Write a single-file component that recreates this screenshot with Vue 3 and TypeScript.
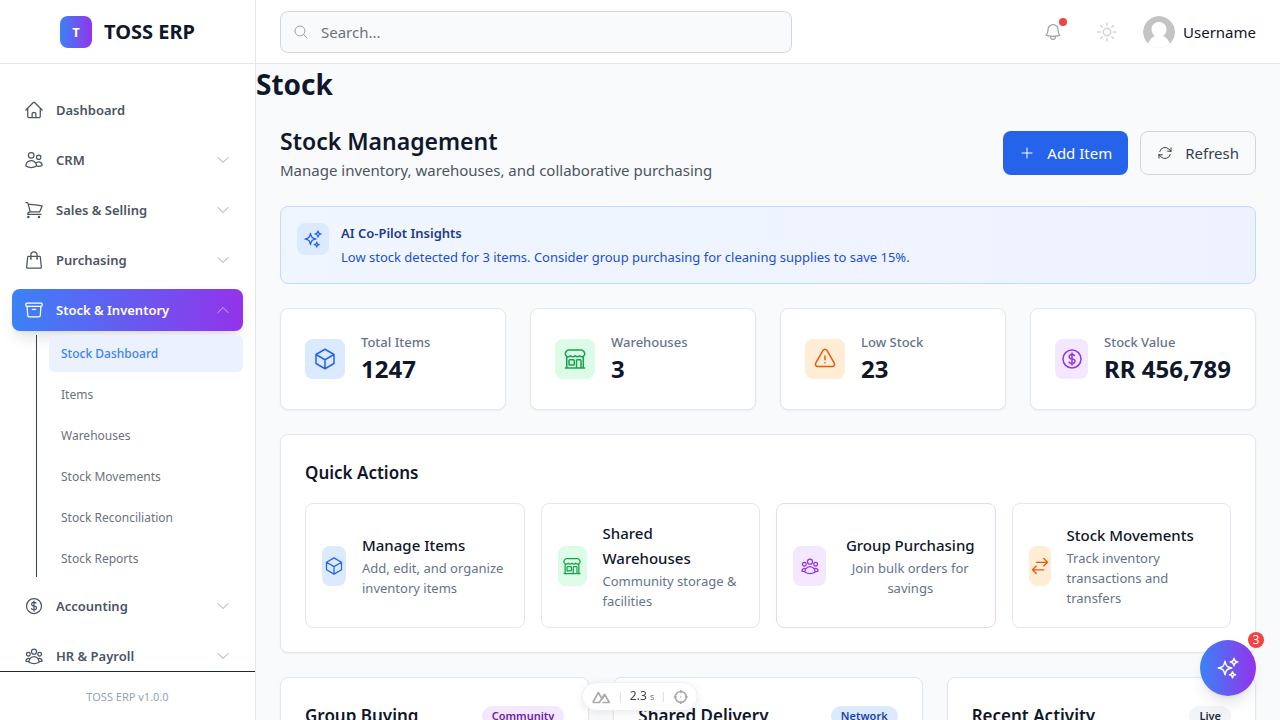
<script setup lang="ts">
import { ref } from 'vue'

const icons: Record<string, string> = {
  home: 'M2.25 12l8.954-8.955c.44-.439 1.152-.439 1.591 0L21.75 12M4.5 9.75v10.125c0 .621.504 1.125 1.125 1.125H9.75v-4.875c0-.621.504-1.125 1.125-1.125h2.25c.621 0 1.125.504 1.125 1.125V21h4.125c.621 0 1.125-.504 1.125-1.125V9.75M8.25 21h8.25',
  users: 'M15 19.128a9.38 9.38 0 002.625.372 9.337 9.337 0 004.121-.952 4.125 4.125 0 00-7.533-2.493M15 19.128v-.003c0-1.113-.285-2.16-.786-3.07M15 19.128v.106A12.318 12.318 0 018.624 21c-2.331 0-4.512-.645-6.374-1.766l-.001-.109a6.375 6.375 0 0111.964-3.07M12 6.375a3.375 3.375 0 11-6.75 0 3.375 3.375 0 016.75 0zm8.25 2.25a2.625 2.625 0 11-5.25 0 2.625 2.625 0 015.25 0z',
  cart: 'M2.25 3h1.386c.51 0 .955.343 1.087.835l.383 1.437M7.5 14.25a3 3 0 00-3 3h15.75m-12.75-3h11.218c1.121-2.3 2.1-4.684 2.924-7.138a60.114 60.114 0 00-16.536-1.84M7.5 14.25L5.106 5.272M6 20.25a.75.75 0 11-1.5 0 .75.75 0 011.5 0zm12.75 0a.75.75 0 11-1.5 0 .75.75 0 011.5 0z',
  bag: 'M15.75 10.5V6a3.75 3.75 0 10-7.5 0v4.5m11.356-1.993l1.263 12c.07.665-.45 1.243-1.119 1.243H4.25a1.125 1.125 0 01-1.12-1.243l1.264-12A1.125 1.125 0 015.513 7.5h12.974c.576 0 1.059.435 1.119 1.007zM8.625 10.5a.375.375 0 11-.75 0 .375.375 0 01.75 0zm7.5 0a.375.375 0 11-.75 0 .375.375 0 01.75 0z',
  archive: 'M20.25 7.5l-.625 10.632a2.25 2.25 0 01-2.247 2.118H6.622a2.25 2.25 0 01-2.247-2.118L3.75 7.5M10 11.25h4M3.375 7.5h17.25c.621 0 1.125-.504 1.125-1.125v-1.5c0-.621-.504-1.125-1.125-1.125H3.375c-.621 0-1.125.504-1.125 1.125v1.5c0 .621.504 1.125 1.125 1.125z',
  dollar: 'M12 6v12m-3-2.818l.879.659c1.171.879 3.07.879 4.242 0 1.172-.879 1.172-2.303 0-3.182C13.536 12.219 12.768 12 12 12c-.725 0-1.45-.22-2.003-.659-1.106-.879-1.106-2.303 0-3.182s2.9-.879 4.006 0l.415.33M21 12a9 9 0 11-18 0 9 9 0 0118 0z',
  group: 'M18 18.72a9.094 9.094 0 003.741-.479 3 3 0 00-4.682-2.72m.94 3.198l.001.031c0 .225-.012.447-.037.666A11.944 11.944 0 0112 21c-2.17 0-4.207-.576-5.963-1.584A6.062 6.062 0 016 18.719m12 0a5.971 5.971 0 00-.941-3.197m0 0A5.995 5.995 0 0012 12.75a5.995 5.995 0 00-5.058 2.772m0 0a3 3 0 00-4.681 2.72 8.986 8.986 0 003.74.477m.94-3.197a5.971 5.971 0 00-.94 3.197M15 6.75a3 3 0 11-6 0 3 3 0 016 0zm6 3a2.25 2.25 0 11-4.5 0 2.25 2.25 0 014.5 0zm-13.5 0a2.25 2.25 0 11-4.5 0 2.25 2.25 0 014.5 0z',
  cube: 'M21 7.5l-9-5.25L3 7.5m18 0l-9 5.25m9-5.25v9l-9 5.25M3 7.5l9 5.25M3 7.5v9l9 5.25m0-9v9',
  store: 'M13.5 21v-7.5a.75.75 0 01.75-.75h3a.75.75 0 01.75.75V21m-4.5 0H2.36m11.14 0H18m0 0h3.64m-1.39 0V9.349m-16.5 11.65V9.35m0 0a3.001 3.001 0 003.75-.615A2.993 2.993 0 009.75 9.75c.896 0 1.7-.393 2.25-1.016a2.993 2.993 0 002.25 1.016c.896 0 1.7-.393 2.25-1.016a3.001 3.001 0 003.75.614m-16.5 0a3.004 3.004 0 01-.621-4.72L4.318 3.44A1.5 1.5 0 015.378 3h13.243a1.5 1.5 0 011.06.44l1.19 1.189a3 3 0 01-.621 4.72m-13.5 8.65h3.75a.75.75 0 00.75-.75V13.5a.75.75 0 00-.75-.75H6.75a.75.75 0 00-.75.75v3.75c0 .415.336.75.75.75z',
  warning: 'M12 9v3.75m-9.303 3.376c-.866 1.5.217 3.374 1.948 3.374h14.71c1.73 0 2.813-1.874 1.948-3.374L13.949 3.378c-.866-1.5-3.032-1.5-3.898 0L2.697 16.126zM12 15.75h.007v.008H12v-.008z',
  swap: 'M7.5 21L3 16.5m0 0L7.5 12M3 16.5h13.5m0-13.5L21 7.5m0 0L16.5 12M21 7.5H7.5',
  sparkles: 'M9.813 15.904L9 18.75l-.813-2.846a4.5 4.5 0 00-3.09-3.09L2.25 12l2.846-.813a4.5 4.5 0 003.09-3.09L9 5.25l.813 2.846a4.5 4.5 0 003.09 3.09L15.75 12l-2.846.813a4.5 4.5 0 00-3.09 3.09zM18.259 8.715L18 9.75l-.259-1.035a3.375 3.375 0 00-2.455-2.456L14.25 6l1.036-.259a3.375 3.375 0 002.455-2.456L18 2.25l.259 1.035a3.375 3.375 0 002.456 2.456L21.75 6l-1.035.259a3.375 3.375 0 00-2.456 2.456zM16.894 20.567L16.5 21.75l-.394-1.183a2.25 2.25 0 00-1.423-1.423L13.5 18.75l1.183-.394a2.25 2.25 0 001.423-1.423l.394-1.183.394 1.183a2.25 2.25 0 001.423 1.423l1.183.394-1.183.394a2.25 2.25 0 00-1.423 1.423z',
  bell: 'M14.857 17.082a23.848 23.848 0 005.454-1.31A8.967 8.967 0 0118 9.75v-.7V9A6 6 0 006 9v.75a8.967 8.967 0 01-2.312 6.022c1.733.64 3.56 1.085 5.455 1.31m5.714 0a24.255 24.255 0 01-5.714 0m5.714 0a3 3 0 11-5.714 0',
  sun: 'M12 3v2.25m6.364.386l-1.591 1.591M21 12h-2.25m-.386 6.364l-1.591-1.591M12 18.75V21m-4.773-4.227l-1.591 1.591M5.25 12H3m4.227-4.773L5.636 5.636M15.75 12a3.75 3.75 0 11-7.5 0 3.75 3.75 0 017.5 0z',
  plus: 'M12 4.5v15m7.5-7.5h-15',
  refresh: 'M16.023 9.348h4.992v-.001M2.985 19.644v-4.992m0 0h4.992m-4.993 0l3.181 3.183a8.25 8.25 0 0013.803-3.7M4.031 9.865a8.25 8.25 0 0113.803-3.7l3.181 3.182m0-4.991v4.99',
  search: 'M21 21l-5.197-5.197m0 0A7.5 7.5 0 105.196 5.196a7.5 7.5 0 0010.607 10.607z',
  down: 'M19.5 8.25l-7.5 7.5-7.5-7.5',
  up: 'M4.5 15.75l7.5-7.5 7.5 7.5',
}

interface NavItem { label: string; icon: string; children?: string[]; leaf?: boolean }

const nav: NavItem[] = [
  { label: 'Dashboard', icon: 'home', leaf: true },
  { label: 'CRM', icon: 'users' },
  { label: 'Sales & Selling', icon: 'cart' },
  { label: 'Purchasing', icon: 'bag' },
  {
    label: 'Stock & Inventory',
    icon: 'archive',
    children: ['Stock Dashboard', 'Items', 'Warehouses', 'Stock Movements', 'Stock Reconciliation', 'Stock Reports'],
  },
  { label: 'Accounting', icon: 'dollar' },
  { label: 'HR & Payroll', icon: 'group' },
]

const stats = [
  { label: 'Total Items', value: '1247', icon: 'cube', tone: 'blue' },
  { label: 'Warehouses', value: '3', icon: 'store', tone: 'green' },
  { label: 'Low Stock', value: '23', icon: 'warning', tone: 'orange' },
  { label: 'Stock Value', value: 'RR 456,789', icon: 'dollar', tone: 'purple' },
]

const actions = [
  { title: 'Manage Items', text: 'Add, edit, and organize inventory items', icon: 'cube', tone: 'blue' },
  { title: 'Shared Warehouses', text: 'Community storage & facilities', icon: 'store', tone: 'green' },
  { title: 'Group Purchasing', text: 'Join bulk orders for savings', icon: 'group', tone: 'purple' },
  { title: 'Stock Movements', text: 'Track inventory transactions and transfers', icon: 'swap', tone: 'orange' },
]

const panels = [
  { title: 'Group Buying', badge: 'Community', tone: 'purple' },
  { title: 'Shared Delivery', badge: 'Network', tone: 'blue' },
  { title: 'Recent Activity', badge: 'Live', tone: 'gray' },
]

const query = ref('')
</script>

<template>
  <div class="shell">
    <aside class="sidebar">
      <div class="brand">
        <span class="brand-mark">T</span>
        <span class="brand-name">TOSS ERP</span>
      </div>
      <nav class="nav" aria-label="Main">
        <div v-for="item in nav" :key="item.label">
          <a v-if="item.leaf" href="#" class="nav-item">
            <svg class="icon i20" viewBox="0 0 24 24"><path :d="icons[item.icon]" /></svg>
            <span class="nav-label">{{ item.label }}</span>
          </a>
          <button v-else type="button" class="nav-item" :class="{ active: item.children }" :aria-expanded="!!item.children">
            <svg class="icon i20" viewBox="0 0 24 24"><path :d="icons[item.icon]" /></svg>
            <span class="nav-label">{{ item.label }}</span>
            <svg class="icon i16 chevron" viewBox="0 0 24 24"><path :d="item.children ? icons.up : icons.down" /></svg>
          </button>
          <div v-if="item.children" class="subnav">
            <a v-for="(child, i) in item.children" :key="child" href="#" class="sub-item" :class="{ current: i === 0 }">{{ child }}</a>
          </div>
        </div>
      </nav>
      <div class="version">TOSS ERP v1.0.0</div>
    </aside>

    <div class="page">
      <header class="topbar">
        <label class="search">
          <svg class="icon i16" viewBox="0 0 24 24"><path :d="icons.search" /></svg>
          <input v-model="query" type="search" placeholder="Search..." aria-label="Search">
        </label>
        <div class="tools">
          <button type="button" class="tool" aria-label="Notifications">
            <svg class="icon i20" viewBox="0 0 24 24"><path :d="icons.bell" /></svg>
            <span class="dot"></span>
          </button>
          <button type="button" class="tool pale" aria-label="Toggle theme">
            <svg class="icon i24" viewBox="0 0 24 24"><path :d="icons.sun" /></svg>
          </button>
          <button type="button" class="user">
            <svg class="avatar" viewBox="0 0 32 32">
              <circle cx="16" cy="16" r="16" fill="#c4c4c4" />
              <path d="M16 6c-4.300 0-7.500 3.300-7.500 7.500 0 3 1.700 5.400 3.500 6.500-3 1-6 4.500-7 8.200V32h22v-3.800c-1-3.700-4-7.200-7-8.200 1.800-1.100 3.500-3.500 3.500-6.500C23.500 9.300 20.300 6 16 6z" fill="#fff" />
            </svg>
            <span>Username</span>
          </button>
        </div>
      </header>

      <main class="main">
        <h1 class="page-title">Stock</h1>
        <div class="content">
          <div class="heading">
            <div>
              <h2>Stock Management</h2>
              <p>Manage inventory, warehouses, and collaborative purchasing</p>
            </div>
            <div class="buttons">
              <button type="button" class="btn primary">
                <svg class="icon i16" viewBox="0 0 24 24"><path :d="icons.plus" /></svg>Add Item
              </button>
              <button type="button" class="btn outline">
                <svg class="icon i16" viewBox="0 0 24 24"><path :d="icons.refresh" /></svg>Refresh
              </button>
            </div>
          </div>

          <section class="insight">
            <span class="insight-icon blue"><svg class="icon i20" viewBox="0 0 24 24"><path :d="icons.sparkles" /></svg></span>
            <div>
              <h3>AI Co-Pilot Insights</h3>
              <p>Low stock detected for 3 items. Consider group purchasing for cleaning supplies to save 15%.</p>
            </div>
          </section>

          <section class="stats">
            <article v-for="s in stats" :key="s.label" class="card stat">
              <span class="tile" :class="s.tone"><svg class="icon i24" viewBox="0 0 24 24"><path :d="icons[s.icon]" /></svg></span>
              <div>
                <p class="stat-label">{{ s.label }}</p>
                <p class="stat-value">{{ s.value }}</p>
              </div>
            </article>
          </section>

          <section class="card quick">
            <h3>Quick Actions</h3>
            <div class="actions">
              <button v-for="a in actions" :key="a.title" type="button" class="action" :class="'is-' + a.tone">
                <span class="tile" :class="a.tone"><svg class="icon i20" viewBox="0 0 24 24"><path :d="icons[a.icon]" /></svg></span>
                <span class="action-body">
                  <span class="action-title">{{ a.title }}</span>
                  <span class="action-text">{{ a.text }}</span>
                </span>
              </button>
            </div>
          </section>

          <section class="panels">
            <article v-for="p in panels" :key="p.title" class="card panel">
              <h3>{{ p.title }}</h3>
              <span class="badge" :class="'badge-' + p.tone">{{ p.badge }}</span>
            </article>
          </section>
        </div>
      </main>
    </div>

    <div class="devbar">
      <svg class="peaks" viewBox="0 0 20 14"><path d="M11.500 12.500H18.500L14 4.500L11 9.500M2 12.500L7.500 2.500L11 8.500M2 12.500H8.500L13.500 4.500" /></svg>
      <span class="sep"></span>
      <span class="time">2.3 <small>s</small></span>
      <span class="sep"></span>
      <svg class="target" viewBox="0 0 16 16"><circle cx="8" cy="8" r="5.500" /><path d="M8 1v3M8 12v3M1 8h3M12 8h3M8 7.500v1" /></svg>
    </div>

    <button type="button" class="assistant" aria-label="AI assistant">
      <svg class="icon i24" viewBox="0 0 24 24"><path :d="icons.sparkles" /></svg>
      <span class="count">3</span>
    </button>
  </div>
</template>

<style>
body {
  margin: 0;
}
</style>

<style scoped>
.shell {
  display: flex;
  height: 100vh;
  overflow: hidden;
  background: #f9fafb;
  color: #0f172a;
  font-family: "Noto Sans", "Open Sans", sans-serif;
  font-size: 15px;
  line-height: 24px;
}
* {
  box-sizing: border-box;
}
h1, h2, h3, p {
  margin: 0;
}
button {
  font: inherit;
  color: inherit;
  border: 0;
  background: none;
  padding: 0;
  cursor: pointer;
}
a {
  color: inherit;
  text-decoration: none;
}
.icon {
  flex: none;
  display: block;
  fill: none;
  stroke: currentColor;
  stroke-width: 1.5;
  stroke-linecap: round;
  stroke-linejoin: round;
}
.i16 { width: 16px; height: 16px; }
.i20 { width: 20px; height: 20px; }
.i24 { width: 24px; height: 24px; }

.sidebar {
  flex: none;
  width: 256px;
  display: flex;
  flex-direction: column;
  background: #fff;
  border-right: 1px solid #e5e7eb;
}
.brand {
  flex: none;
  height: 64px;
  display: flex;
  align-items: center;
  justify-content: center;
  gap: 12px;
  border-bottom: 1px solid #e5e7eb;
}
.brand-mark {
  width: 32px;
  height: 32px;
  border-radius: 8px;
  background: linear-gradient(90deg, #3b82f6, #9333ea);
  color: #fff;
  font-size: 13px;
  font-weight: 700;
  line-height: 32px;
  text-align: center;
}
.brand-name {
  font-size: 20px;
  font-weight: 700;
}
.nav {
  flex: 1;
  min-height: 0;
  overflow: hidden;
  display: flex;
  flex-direction: column;
  gap: 8px;
  padding: 25px 12px 0;
}
.nav-item {
  width: 100%;
  height: 42px;
  display: flex;
  align-items: center;
  gap: 12px;
  padding: 0 12px;
  border-radius: 8px;
  color: #4b5563;
  font-size: 13px;
  font-weight: 600;
  text-align: left;
}
.nav-label {
  flex: 1;
  white-space: nowrap;
}
.chevron {
  color: #9ca3af;
}
.active {
  background: linear-gradient(90deg, #3b82f6, #9333ea);
  color: #fff;
  box-shadow: 0 10px 15px -3px rgba(0, 0, 0, 0.1), 0 4px 6px -4px rgba(0, 0, 0, 0.1);
}
.active .chevron {
  color: #d8b4fe;
}
.subnav {
  display: flex;
  flex-direction: column;
  gap: 4px;
  margin: 4px 0 0 24px;
  padding-left: 12px;
  border-left: 1px solid #334155;
}
.sub-item {
  height: 37px;
  padding: 0 12px;
  border-radius: 6px;
  color: #6b7280;
  font-size: 12px;
  line-height: 37px;
  white-space: nowrap;
}
.current {
  background: #ebf2fe;
  color: #3b82f6;
  font-weight: 500;
}
.version {
  flex: none;
  height: 49px;
  border-top: 1px solid #1e293b;
  color: #94a3b8;
  font-size: 11px;
  line-height: 50px;
  text-align: center;
}

.page {
  flex: 1;
  min-width: 0;
  display: flex;
  flex-direction: column;
}
.topbar {
  flex: none;
  height: 64px;
  display: flex;
  align-items: center;
  justify-content: space-between;
  gap: 24px;
  padding: 0 24px;
  background: #fff;
  border-bottom: 1px solid #e5e7eb;
}
.search {
  flex: 0 1 512px;
  height: 42px;
  display: flex;
  align-items: center;
  gap: 12px;
  padding: 0 12px;
  border: 1px solid #d1d5db;
  border-radius: 8px;
  background: #f9fafb;
  color: #9ca3af;
}
.search input {
  flex: 1;
  min-width: 0;
  border: 0;
  padding: 0;
  outline: 0;
  background: none;
  font: inherit;
  color: #111827;
}
.search input::placeholder {
  color: #6b7280;
  opacity: 1;
}
.tools {
  flex: none;
  display: flex;
  align-items: center;
}
.tool {
  position: relative;
  width: 36px;
  height: 36px;
  margin-right: 18px;
  display: grid;
  place-items: center;
  color: #9ca3af;
}
.pale {
  color: #d1d5db;
}
.dot {
  position: absolute;
  top: 4px;
  right: 4px;
  width: 8px;
  height: 8px;
  border-radius: 50%;
  background: #ef4444;
}
.user {
  display: flex;
  align-items: center;
  gap: 8px;
}
.avatar {
  width: 32px;
  height: 32px;
  border-radius: 50%;
}

.main {
  flex: 1;
  min-height: 0;
  overflow: hidden;
}
.page-title {
  font-size: 28px;
  font-weight: 700;
  line-height: 40px;
}
.content {
  display: flex;
  flex-direction: column;
  gap: 24px;
  padding: 20px 24px 24px;
}
.heading {
  display: flex;
  align-items: center;
  justify-content: space-between;
  gap: 24px;
}
.heading h2 {
  font-size: 23px;
  font-weight: 600;
  line-height: 34px;
}
.heading p {
  color: #4b5563;
  line-height: 24px;
}
.buttons {
  display: flex;
  gap: 12px;
}
.btn {
  height: 44px;
  display: flex;
  align-items: center;
  gap: 12px;
  padding: 0 16px;
  border: 1px solid #d1d5db;
  border-radius: 8px;
  color: #374151;
  white-space: nowrap;
}
.primary {
  border: 0;
  background: #2563eb;
  color: #fff;
}
.insight {
  display: flex;
  align-items: flex-start;
  gap: 12px;
  min-height: 78px;
  padding: 16px;
  border: 1px solid #bfdbfe;
  border-radius: 8px;
  background: linear-gradient(90deg, #eff6ff, #eef2ff);
}
.insight-icon {
  width: 32px;
  height: 32px;
  display: grid;
  place-items: center;
  border-radius: 8px;
}
.insight h3 {
  font-size: 13px;
  font-weight: 600;
  line-height: 20px;
  color: #1e3a8a;
}
.insight p {
  margin-top: 4px;
  font-size: 13px;
  line-height: 20px;
  color: #1d4ed8;
}
.card {
  background: #fff;
  border: 1px solid #e2e8f0;
  border-radius: 8px;
  box-shadow: 0 1px 2px rgba(0, 0, 0, 0.05);
}
.tile {
  flex: none;
  width: 40px;
  height: 40px;
  display: flex;
  align-items: center;
  justify-content: center;
  border-radius: 8px;
}
.blue { background: #dbeafe; color: #2563eb; }
.green { background: #dcfce7; color: #16a34a; }
.orange { background: #ffedd5; color: #ea580c; }
.purple { background: #f3e8ff; color: #9333ea; }
.stats {
  display: grid;
  grid-template-columns: repeat(4, minmax(0, 1fr));
  gap: 24px;
}
.stat {
  display: flex;
  align-items: center;
  gap: 16px;
  min-height: 102px;
  padding: 20px 24px;
}
.stat .purple {
  width: 33px;
}
.stat-label {
  color: #64748b;
  font-size: 13px;
  font-weight: 500;
  line-height: 20px;
}
.stat-value {
  font-size: 24px;
  font-weight: 700;
  line-height: 34px;
  white-space: nowrap;
}
.quick {
  padding: 24px;
}
.quick h3, .panel h3 {
  font-size: 17px;
  font-weight: 600;
  line-height: 28px;
}
.actions {
  display: grid;
  grid-template-columns: repeat(4, minmax(0, 1fr));
  gap: 16px;
  margin-top: 16px;
}
.action {
  display: flex;
  align-items: center;
  gap: 16px;
  min-height: 125px;
  padding: 16px;
  border: 1px solid #e2e8f0;
  border-radius: 8px;
  text-align: left;
}
.action .blue { width: 24px; }
.action .green { width: 29px; }
.action .purple { width: 33px; }
.action .orange { width: 22px; }
.is-purple {
  border-color: #e9d5ff;
  text-align: center;
}
.action-body {
  flex: 1;
  min-width: 0;
}
.action-title {
  display: block;
  font-weight: 500;
  line-height: 25px;
}
.action-text {
  display: block;
  color: #64748b;
  font-size: 13px;
  line-height: 20px;
}
.panels {
  display: grid;
  grid-template-columns: repeat(3, minmax(0, 1fr));
  gap: 24px;
}
.panel {
  display: flex;
  align-items: center;
  justify-content: space-between;
  padding: 24px;
}
.badge {
  padding: 2px 10px;
  border-radius: 12px;
  font-size: 11px;
  font-weight: 600;
  line-height: 16px;
}
.badge-purple { background: #f3e8ff; color: #6b21a8; }
.badge-blue { background: #dbeafe; color: #1e40af; }
.badge-gray { background: #f1f5f9; color: #1e293b; }

.devbar {
  position: fixed;
  left: 50%;
  bottom: 9px;
  transform: translateX(-50%);
  display: flex;
  align-items: center;
  gap: 9px;
  height: 29px;
  padding: 0 8px;
  border: 1px solid #efefef;
  border-radius: 15px;
  background: #fff;
  box-shadow: 0 2px 8px rgba(0, 0, 0, 0.08);
  font-size: 12px;
  line-height: 16px;
  color: #444;
  white-space: nowrap;
}
.devbar svg {
  flex: none;
  fill: none;
  stroke: #aaa;
  stroke-width: 1.6;
  stroke-linejoin: round;
}
.peaks { width: 20px; height: 14px; }
.target { width: 16px; height: 16px; }
.sep {
  width: 1px;
  height: 10px;
  background: #ddd;
}
.time small {
  font-size: 9px;
  color: #777;
}
.assistant {
  position: fixed;
  right: 24px;
  bottom: 24px;
  width: 56px;
  height: 56px;
  display: grid;
  place-items: center;
  border-radius: 50%;
  background: linear-gradient(90deg, #3b82f6, #9333ea);
  color: #fff;
  box-shadow: 0 10px 15px -3px rgba(0, 0, 0, 0.1), 0 4px 6px -4px rgba(0, 0, 0, 0.1);
}
.count {
  position: absolute;
  top: -8px;
  right: -8px;
  width: 16px;
  height: 16px;
  border-radius: 50%;
  background: #ef4444;
  font-size: 12px;
  line-height: 16px;
  text-align: center;
}
</style>
